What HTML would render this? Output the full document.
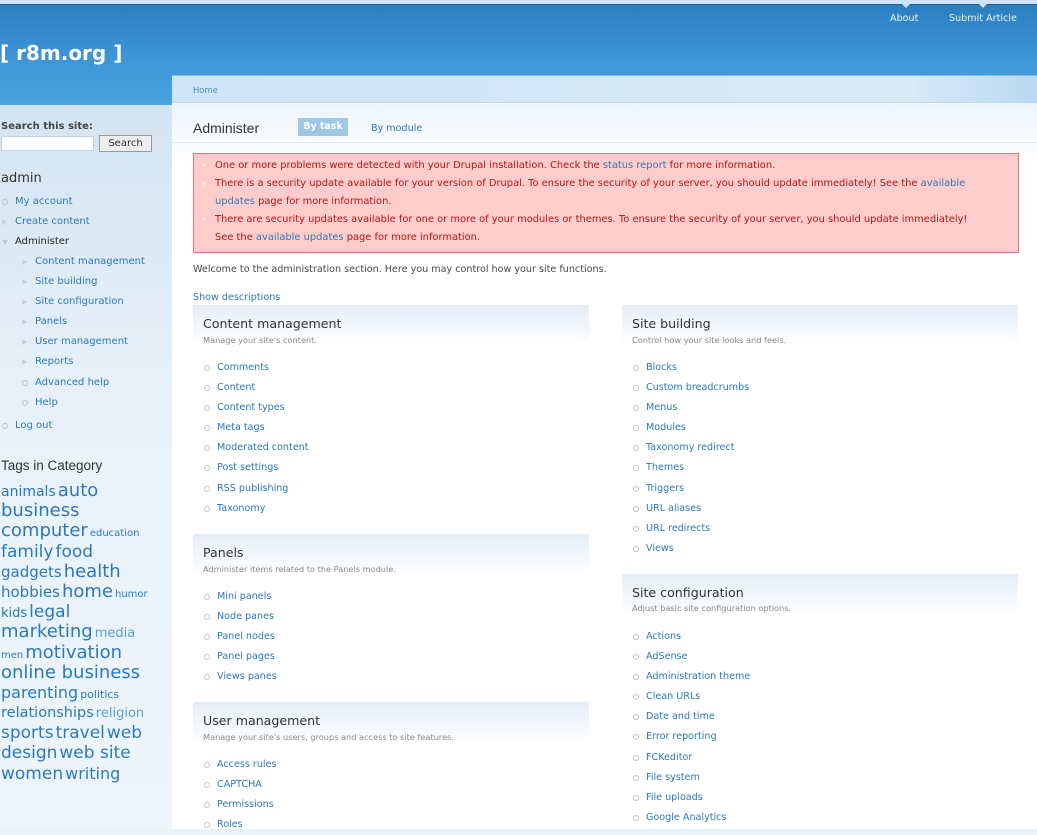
<!DOCTYPE html>
<html><head><meta charset="utf-8"><style>
*{margin:0;padding:0;box-sizing:border-box}
body{width:1037px;height:829px;overflow:hidden;position:relative;font-family:"DejaVu Sans","Liberation Sans",sans-serif;font-size:9.4px;color:#494949;background:#eaf2f9}
a{color:#2b7ab8;text-decoration:none}
.abs{position:absolute;white-space:nowrap}
#top{position:absolute;left:0;top:0;width:1037px;height:5px;background:#cfe3f2;border-bottom:1px solid #1f5e99}
#hdr{position:absolute;left:0;top:5px;width:1037px;height:100px;background:linear-gradient(#2a7fbf,#3f98d8 60%,#4aa2de)}
#side{position:absolute;left:0;top:105px;width:172px;height:724px;background:linear-gradient(#d3e4f2,#e8f1f9 300px,#eef5fb)}
#crumb{position:absolute;left:172px;top:75px;width:865px;height:28px;background:linear-gradient(90deg,#cfe4f5,#d9eaf7 85%,#b7d9f2);border-top:1px solid #8dbde2;border-bottom:1px solid #c3d8e9}
#main{position:absolute;left:172px;top:103px;width:865px;height:726px;background:linear-gradient(#edf4fa,#fff 60px)}
.err{position:absolute;left:193px;top:153px;width:826px;height:100px;background:#ffcccc;border:1px solid #dd7777;color:#b31616;font-size:9.9px;line-height:18px;padding:3px 14px 0 21px}
.err p{position:relative}
.err p:before{content:"";position:absolute;left:-13px;top:6px;width:4px;height:4px;border-radius:50%;background:#f2e6e6}
.panel{position:absolute;height:36px;background:linear-gradient(#e3edf7,#fbfdff);}
.pt{font-size:12.6px;color:#333}
.pd{font-size:8.2px;color:#888}
ul{list-style:none}
li{position:relative;height:20.1px;line-height:20px}
li:before{content:"";position:absolute;left:-13px;top:7px;width:4px;height:4px;border:1px solid #b8c4cf;border-radius:50%}
.t2:before{border:none!important;border-radius:0!important;width:0!important;height:0!important;border-left:5px solid #c5d4e0!important;border-top:3px solid transparent!important;border-bottom:3px solid transparent!important;top:7px!important}
.t3:before{border:none!important;border-radius:0!important;width:0!important;height:0!important;border-left:3px solid transparent!important;border-right:3px solid transparent!important;border-top:5px solid #b9cbd9!important;top:8px!important}
.tags div{height:20.2px;line-height:20px;white-space:nowrap}
.tags a{margin-right:2px;vertical-align:baseline}
</style></head><body>
<div id="top"></div>
<div id="hdr"></div>
<div class="abs" style="left:0;top:41px;font-size:20px;color:#fff;font-weight:bold">[ r8m.org ]</div>
<div class="abs" style="left:890px;top:13px;color:#e6f2fb;font-size:9.6px">About</div>
<div class="abs" style="left:949px;top:13px;color:#e6f2fb;font-size:9.6px">Submit Article</div>
<div class="abs" style="left:901px;top:3px;width:0;height:0;border-left:5px solid transparent;border-right:5px solid transparent;border-top:5px solid #cfe3f2"></div>
<div class="abs" style="left:978px;top:3px;width:0;height:0;border-left:5px solid transparent;border-right:5px solid transparent;border-top:5px solid #cfe3f2"></div>
<div id="side"></div>
<div id="crumb"></div>
<div class="abs" style="left:193px;top:85px;font-size:8.4px;color:#4a90c8">Home</div>
<div id="main"></div>

<div class="abs" style="left:1px;top:121px;font-weight:bold;font-size:10px;color:#444">Search this site:</div>
<div class="abs" style="left:1px;top:136px;width:93px;height:15px;background:#fff;border:1px solid #c7d3de"></div>
<div class="abs" style="left:99px;top:135px;width:53px;height:17px;background:#eee;border:1px solid #999;font-size:10px;text-align:center;line-height:15px;color:#333">Search</div>
<div class="abs" style="left:1px;top:171px;font-size:13px;color:#333">admin</div>
<ul class="abs" style="left:15px;top:192px;font-size:10px">
<li><a>My account</a></li>
<li class="t2"><a>Create content</a></li>
<li class="t3" style="color:#222">Administer</li>
</ul>
<ul class="abs" style="left:35px;top:252px;font-size:10px">
<li class="t2"><a>Content management</a></li>
<li class="t2"><a>Site building</a></li>
<li class="t2"><a>Site configuration</a></li>
<li class="t2"><a>Panels</a></li>
<li class="t2"><a>User management</a></li>
<li class="t2"><a>Reports</a></li>
<li><a>Advanced help</a></li>
<li><a>Help</a></li>
</ul>
<ul class="abs" style="left:15px;top:416px;font-size:10px"><li><a>Log out</a></li></ul>
<div class="abs" style="left:1px;top:458px;font-size:13.5px;color:#333;font-family:'Liberation Sans',sans-serif">Tags in Category</div>
<div class="abs tags" style="left:1px;top:481px;color:#2b7ab8">
<div><a style="font-size:14px">animals</a><a style="font-size:18px">auto</a></div>
<div><a style="font-size:18px">business</a></div>
<div><a style="font-size:18px">computer</a><a style="font-size:10px">education</a></div>
<div><a style="font-size:17px">family</a><a style="font-size:17px">food</a></div>
<div><a style="font-size:15px">gadgets</a><a style="font-size:18px">health</a></div>
<div><a style="font-size:15px">hobbies</a><a style="font-size:18px">home</a><a style="font-size:10px">humor</a></div>
<div><a style="font-size:13px">kids</a><a style="font-size:17px">legal</a></div>
<div><a style="font-size:18px">marketing</a><a style="font-size:13px;color:#5b9fd0">media</a></div>
<div><a style="font-size:10px">men</a><a style="font-size:18px">motivation</a></div>
<div><a style="font-size:18px">online business</a></div>
<div><a style="font-size:16px">parenting</a><a style="font-size:11px">politics</a></div>
<div><a style="font-size:14.5px">relationships</a><a style="font-size:13px;color:#5b9fd0">religion</a></div>
<div><a style="font-size:17px">sports</a><a style="font-size:17px">travel</a><a style="font-size:17px">web</a></div>
<div><a style="font-size:17px">design</a><a style="font-size:17px">web site</a></div>
<div><a style="font-size:17px">women</a><a style="font-size:16px">writing</a></div>
</div>

<div class="abs" style="left:193px;top:120px;font-size:14px;color:#333;font-family:'Liberation Sans',sans-serif">Administer</div>
<div class="abs" style="left:298px;top:118px;width:50px;height:18px;background:#9ec8e6;color:#fff;font-weight:bold;font-size:9.4px;line-height:18px;text-align:center">By task</div>
<div class="abs" style="left:371px;top:123px;color:#2b7ab8;font-size:9.6px">By module</div>
<div class="abs" style="left:172px;top:142px;width:865px;height:1px;background:#e2ebf3"></div>

<div class="err">
<p>One or more problems were detected with your Drupal installation. Check the <a>status report</a> for more information.</p>
<p>There is a security update available for your version of Drupal. To ensure the security of your server, you should update immediately! See the <a>available updates</a> page for more information.</p>
<p>There are security updates available for one or more of your modules or themes. To ensure the security of your server, you should update immediately!<br>See the <a>available updates</a> page for more information.</p>
</div>

<div class="abs" style="left:193px;top:264px;font-size:9.6px">Welcome to the administration section. Here you may control how your site functions.</div>
<div class="abs" style="left:193px;top:292px;font-size:9.6px"><a>Show descriptions</a></div>

<div class="panel" style="left:193px;top:305px;width:396px"></div>
<div class="abs pt" style="left:203px;top:316px">Content management</div>
<div class="abs pd" style="left:203px;top:335px">Manage your site's content.</div>
<ul class="abs" style="left:217px;top:358px;font-size:9.6px">
<li><a>Comments</a></li><li><a>Content</a></li><li><a>Content types</a></li><li><a>Meta tags</a></li><li><a>Moderated content</a></li><li><a>Post settings</a></li><li><a>RSS publishing</a></li><li><a>Taxonomy</a></li></ul>

<div class="panel" style="left:193px;top:534px;width:396px"></div>
<div class="abs pt" style="left:203px;top:545px">Panels</div>
<div class="abs pd" style="left:203px;top:564px">Administer items related to the Panels module.</div>
<ul class="abs" style="left:217px;top:587px;font-size:9.6px">
<li><a>Mini panels</a></li><li><a>Node panes</a></li><li><a>Panel nodes</a></li><li><a>Panel pages</a></li><li><a>Views panes</a></li></ul>

<div class="panel" style="left:193px;top:702px;width:396px"></div>
<div class="abs pt" style="left:203px;top:713px">User management</div>
<div class="abs pd" style="left:203px;top:732px">Manage your site's users, groups and access to site features.</div>
<ul class="abs" style="left:217px;top:755px;font-size:9.6px">
<li><a>Access rules</a></li><li><a>CAPTCHA</a></li><li><a>Permissions</a></li><li><a>Roles</a></li></ul>

<div class="panel" style="left:622px;top:305px;width:396px"></div>
<div class="abs pt" style="left:632px;top:316px">Site building</div>
<div class="abs pd" style="left:632px;top:335px">Control how your site looks and feels.</div>
<ul class="abs" style="left:646px;top:358px;font-size:9.6px">
<li><a>Blocks</a></li><li><a>Custom breadcrumbs</a></li><li><a>Menus</a></li><li><a>Modules</a></li><li><a>Taxonomy redirect</a></li><li><a>Themes</a></li><li><a>Triggers</a></li><li><a>URL aliases</a></li><li><a>URL redirects</a></li><li><a>Views</a></li></ul>

<div class="panel" style="left:622px;top:574px;width:396px"></div>
<div class="abs pt" style="left:632px;top:585px">Site configuration</div>
<div class="abs pd" style="left:632px;top:603px">Adjust basic site configuration options.</div>
<ul class="abs" style="left:646px;top:627px;font-size:9.6px">
<li><a>Actions</a></li><li><a>AdSense</a></li><li><a>Administration theme</a></li><li><a>Clean URLs</a></li><li><a>Date and time</a></li><li><a>Error reporting</a></li><li><a>FCKeditor</a></li><li><a>File system</a></li><li><a>File uploads</a></li><li><a>Google Analytics</a></li></ul>
</body></html>
